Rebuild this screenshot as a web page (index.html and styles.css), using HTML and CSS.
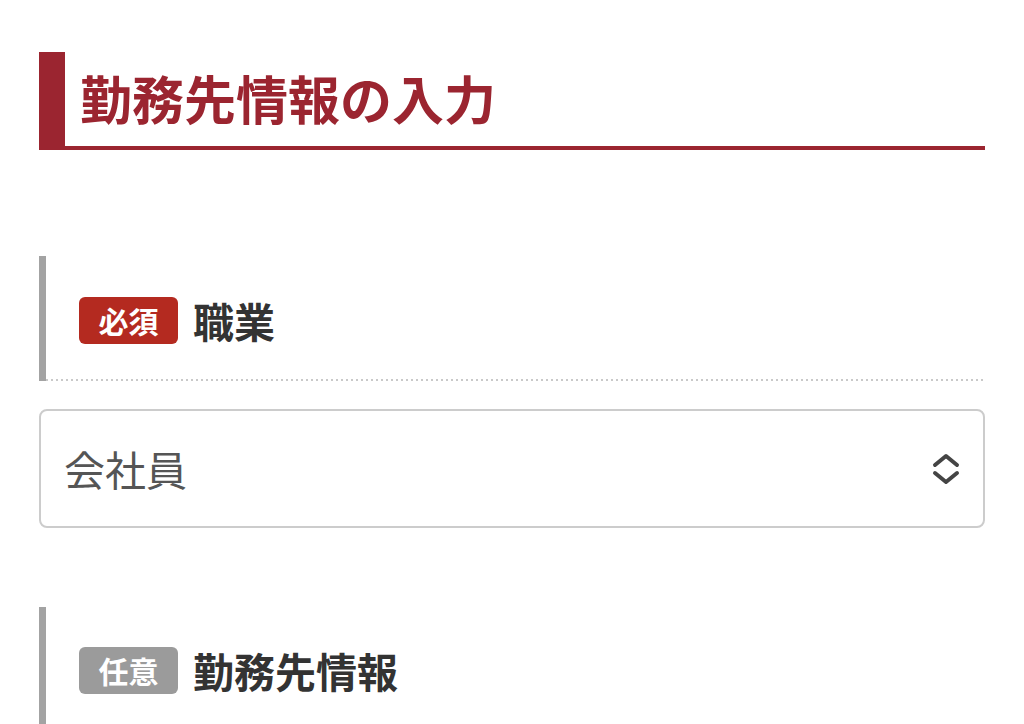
FILE: index.html
```html
<!DOCTYPE html>
<html lang="ja">
<head>
<meta charset="utf-8">
<title>勤務先情報の入力</title>
<link rel="stylesheet" href="styles.css">
</head>
<body>
<main class="page">
  <h1 class="section-title">勤務先情報の入力</h1>

  <section class="field">
    <div class="field-head">
      <span class="badge badge-required">必須</span>
      <span class="field-label">職業</span>
    </div>
    <div class="select">
      <span class="select-value">会社員</span>
      <svg class="select-icon" width="30" height="32" viewBox="0 0 30 32" aria-hidden="true">
        <path d="M4 12 L15 3 L26 12" fill="none" stroke="#444" stroke-width="4" stroke-linecap="round" stroke-linejoin="round"/>
        <path d="M4 20 L15 29 L26 20" fill="none" stroke="#444" stroke-width="4" stroke-linecap="round" stroke-linejoin="round"/>
      </svg>
    </div>
  </section>

  <section class="field field-second">
    <div class="field-head field-head-open">
      <span class="badge badge-optional">任意</span>
      <span class="field-label">勤務先情報</span>
    </div>
  </section>
</main>
</body>
</html>
```

FILE: styles.css
```css
* {
  box-sizing: border-box;
}

html, body {
  margin: 0;
  padding: 0;
  background: #ffffff;
}

body {
  font-family: "Noto Sans CJK JP", "Noto Sans", sans-serif;
  overflow: hidden;
  height: 724px;
}

.page {
  padding: 52px 39px 0 39px;
}

.section-title {
  margin: 0;
  height: 98px;
  border-left: 26px solid #9b2530;
  border-bottom: 4px solid #9b2530;
  padding-left: 15px;
  display: flex;
  align-items: center;
  color: #9b2530;
  font-size: 52px;
  font-weight: 700;
  line-height: 1;
  padding-bottom: 2px;
}

.field {
  margin-top: 106px;
}

.field-second {
  margin-top: 79px;
}

.field-head {
  height: 125px;
  border-left: 7px solid #a3a3a3;
  padding-left: 33px;
  display: flex;
  align-items: center;
  gap: 15px;
  padding-top: 3px;
  background-image: linear-gradient(to right, #c9c9c9 2px, transparent 2px);
  background-size: 5px 2px;
  background-repeat: repeat-x;
  background-position: left bottom;
}

.field-head-open {
  background-image: none;
  height: 140px;
  padding-top: 0;
  padding-bottom: 14px;
}

.badge {
  width: 99px;
  height: 47px;
  border-radius: 6px;
  color: #ffffff;
  font-size: 30px;
  font-weight: 700;
  display: flex;
  align-items: center;
  justify-content: center;
  line-height: 1;
}

.badge-required {
  background: #b42a20;
}

.badge-optional {
  background: #9b9b9b;
}

.field-label {
  font-size: 41px;
  font-weight: 700;
  color: #333333;
  line-height: 1;
}

.select {
  margin-top: 28px;
  height: 119px;
  border: 2px solid #cccccc;
  border-radius: 8px;
  padding: 0 22px 0 23px;
  display: flex;
  align-items: center;
  justify-content: space-between;
}

.select-value {
  font-size: 41px;
  color: #555555;
  line-height: 1;
}

.select-icon {
  display: block;
}
```
